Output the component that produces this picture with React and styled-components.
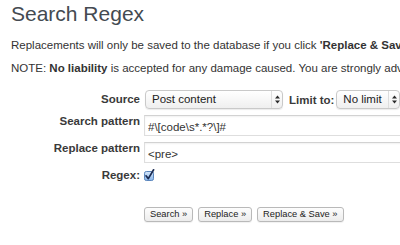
import React from "react";
import styled, { createGlobalStyle } from "styled-components";

const GlobalStyle = createGlobalStyle`
  html, body {
    margin: 0;
    padding: 0;
    background: #ffffff;
    overflow: hidden;
  }
  body {
    font-family: "Liberation Sans", Helvetica, Arial, sans-serif;
    font-size: 11.5px;
    color: #333333;
  }
`;

const Page = styled.div`
  padding: 1px 0 0 11px;
  width: 389px;
  height: 244px;
  white-space: nowrap;
`;

const Title = styled.h2`
  margin: 0;
  font-size: 21px;
  line-height: 26px;
  font-weight: normal;
  color: #444a51;
`;

const Notice = styled.p`
  margin: ${(p) => p.$mt}px 0 0;
  font-size: 11.5px;
  line-height: 15px;
  color: #333333;
  white-space: nowrap;
`;

const FormGrid = styled.div`
  display: grid;
  grid-template-columns: 129px auto;
  column-gap: 4px;
  row-gap: 6px;
  margin-top: 14px;
`;

const Label = styled.div`
  text-align: right;
  font-weight: bold;
  font-size: 11.5px;
  line-height: 13px;
  color: #3a3a3a;
  align-self: ${(p) => (p.$center ? "center" : "start")};
`;

const Field = styled.div`
  display: flex;
  align-items: center;
  gap: ${(p) => p.$gap || 0}px;
  margin-top: ${(p) => p.$mt || 0}px;
`;

const SelectBox = styled.div`
  box-sizing: border-box;
  display: flex;
  align-items: stretch;
  width: ${(p) => p.$w}px;
  height: 19px;
  margin-left: ${(p) => p.$ml || 0}px;
  border: 1px solid #c9c9c9;
  border-radius: 4px;
  background: linear-gradient(#ffffff, #efefef);
  box-shadow: 0 1px 1px rgba(0, 0, 0, 0.08);
  overflow: hidden;
`;

const SelectText = styled.span`
  flex: 1;
  padding-left: 6px;
  font-size: 11.5px;
  line-height: 17px;
  color: #222222;
`;

const SelectArrow = styled.span`
  width: 10px;
  display: flex;
  align-items: center;
  justify-content: center;
  border-left: 1px solid #dddddd;
`;

const InlineLabel = styled.span`
  font-weight: bold;
  font-size: 11.5px;
  color: #3a3a3a;
  margin: 0 2px 0 6px;
`;

const TextInput = styled.input`
  box-sizing: border-box;
  width: 300px;
  height: 21px;
  margin: 0;
  padding: 3px 3px 0;
  border: 1px solid #dedede;
  border-top-color: #d2d2d2;
  border-radius: 0;
  box-shadow: inset 0 1px 2px rgba(0, 0, 0, 0.06);
  background: #ffffff;
  font-family: "Liberation Sans", Helvetica, Arial, sans-serif;
  font-size: 11.5px;
  line-height: 15px;
  color: #333333;
  outline: none;
`;

const Button = styled.button`
  box-sizing: border-box;
  height: 15px;
  margin: 0;
  padding: 0 5px;
  border: 1px solid #b9b9b9;
  border-radius: 3px;
  background: linear-gradient(#fdfdfd, #ececec);
  box-shadow: 0 1px 1px rgba(0, 0, 0, 0.06);
  font-family: "Liberation Sans", Helvetica, Arial, sans-serif;
  font-size: 9.3px;
  line-height: 13px;
  color: #222222;
  cursor: pointer;
`;

const CheckWrap = styled.span`
  display: inline-flex;
  width: 10px;
  height: 10px;
`;

const Arrows = () => (
  <svg width="5" height="9" viewBox="0 0 5 9">
    <path d="M0 3.6 L2.5 0.6 L5 3.6 Z" fill="#2a2a2a" />
    <path d="M0 5.4 L2.5 8.4 L5 5.4 Z" fill="#2a2a2a" />
  </svg>
);

const Select = ({ w, ml, children }) => (
  <SelectBox $w={w} $ml={ml}>
    <SelectText>{children}</SelectText>
    <SelectArrow>
      <Arrows />
    </SelectArrow>
  </SelectBox>
);

const Checkbox = () => (
  <CheckWrap>
    <svg width="10" height="10" viewBox="0 0 10 10" style={{ overflow: "visible" }}>
      <defs>
        <linearGradient id="cbg" x1="0" y1="0" x2="0" y2="1">
          <stop offset="0" stopColor="#d8e8fa" />
          <stop offset="1" stopColor="#86b4ea" />
        </linearGradient>
      </defs>
      <rect x="0.5" y="0.5" width="9" height="9" rx="1.8" fill="url(#cbg)" stroke="#5b86bd" />
      <path d="M2 4.8 L4.3 7.6 L9.6 -1.2" fill="none" stroke="#1b2b52" strokeWidth="1.7" strokeLinecap="round" strokeLinejoin="round" />
    </svg>
  </CheckWrap>
);

export default function App() {
  return (
    <>
      <GlobalStyle />
      <Page>
        <Title>Search Regex</Title>
        <Notice $mt={10.5}>
          Replacements will only be saved to the database if you click <b>'Replace &amp; Save »'</b>.
        </Notice>
        <Notice $mt={8.5}>
          NOTE: <b>No liability</b> is accepted for any damage caused. You are strongly advised to backup your database before making any changes.
        </Notice>
        <FormGrid>
          <Label $center>Source</Label>
          <Field>
            <Select w={138} ml={1}>Post content</Select>
            <InlineLabel>Limit to:</InlineLabel>
            <Select w={64}>No limit</Select>
          </Field>

          <Label>Search pattern</Label>
          <Field>
            <TextInput readOnly value={"#\\[code\\s*.*?\\]#"} />
          </Field>

          <Label>Replace pattern</Label>
          <Field>
            <TextInput readOnly value="<pre>" />
          </Field>

          <Label $center>Regex:</Label>
          <Field>
            <Checkbox />
          </Field>

          <span />
          <Field $gap={5} $mt={19}>
            <Button>Search »</Button>
            <Button>Replace »</Button>
            <Button>Replace &amp; Save »</Button>
          </Field>
        </FormGrid>
      </Page>
    </>
  );
}
